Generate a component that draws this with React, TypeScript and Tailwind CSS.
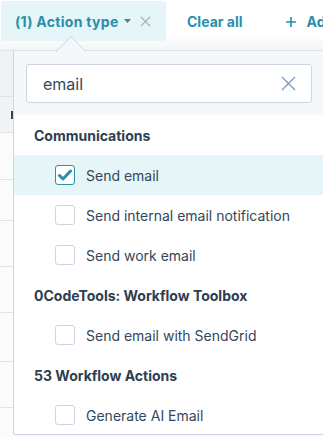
import { FC } from "react";

type Item = { label: string; checked?: boolean };
type Group = { title: string; items: Item[] };

const groups: Group[] = [
  {
    title: "Communications",
    items: [
      { label: "Send email", checked: true },
      { label: "Send internal email notification" },
      { label: "Send work email" },
    ],
  },
  {
    title: "0CodeTools: Workflow Toolbox",
    items: [{ label: "Send email with SendGrid" }],
  },
  {
    title: "53 Workflow Actions",
    items: [{ label: "Generate AI Email" }],
  },
];

const tableRows = [46, 36, 47, 41, 46, 46, 49, 46, 40];

const Checkbox: FC<{ checked?: boolean }> = ({ checked }) => (
  <span
    className={`flex h-5 w-5 shrink-0 items-center justify-center rounded-[3px] border bg-white ${
      checked ? "border-[#2a8fab]" : "border-[#cbd6e2]"
    }`}
  >
    {checked && (
      <svg width="14" height="12" viewBox="0 0 14 12">
        <path
          d="M1.5 6.5 L5 10 L12.5 2"
          fill="none"
          stroke="#2a8fab"
          strokeWidth="3"
          strokeLinecap="round"
          strokeLinejoin="round"
        />
      </svg>
    )}
  </span>
);

const App: FC = () => {
  return (
    <div className="relative h-[437px] w-[323px] overflow-hidden bg-white font-['Inter',sans-serif] text-[#33475b]">
      {/* filter bar */}
      <div className="flex h-[51px] items-start whitespace-nowrap border-b border-[#dfe3eb] bg-gradient-to-b from-white from-70% to-[#f2f4f7]">
        <div className="ml-px mt-px flex h-10 w-[165px] shrink-0 items-center rounded-[3px] bg-[#e5f5f8] pl-[14px] text-[14px] font-bold text-[#2a8fab]">
          <span className="tracking-[0.3px]">(1) Action type</span>
          <svg className="ml-[5px] shrink-0" width="7" height="4" viewBox="0 0 7 4">
            <path d="M0 0 L7 0 L3.5 4 Z" fill="#2a8fab" />
          </svg>
          <svg className="ml-[9px] shrink-0" width="11" height="11" viewBox="0 0 12 12">
            <path d="M1 1 L11 11 M11 1 L1 11" stroke="#99afc4" strokeWidth="1.4" />
          </svg>
        </div>
        <span className="ml-[21px] mt-[11px] shrink-0 text-[14px] font-bold text-[#2a8fab]">Clear all</span>
        <span className="ml-[43px] mt-[11px] flex shrink-0 items-center gap-[11px] text-[14px] font-bold text-[#2a8fab]">
          <svg width="10" height="10" viewBox="0 0 10 10">
            <path d="M5 0 V10 M0 5 H10" stroke="#2a8fab" strokeWidth="1.6" />
          </svg>
          Add filter
        </span>
      </div>

      {/* table behind */}
      <div className="flex flex-col">
        {tableRows.map((h, i) => (
          <div
            key={i}
            style={{ height: h }}
            className={`border-b border-[#dfe3eb] ${i < 2 ? "bg-[#f0f3f6]" : "bg-[#fbfbfc]"}`}
          />
        ))}
      </div>
      <div className="absolute left-[11px] top-[111px] h-2 w-[2px] bg-[#33475b]" />

      {/* popover */}
      <div className="absolute left-[13px] top-[51px] h-[384px] w-[322px] overflow-hidden whitespace-nowrap rounded-b-[3px] border border-t-0 border-[#cbd6e2] bg-white">
        <div className="bg-[#f5f8fa] px-3 pb-3 pt-[13px]">
          <div className="flex h-[39px] w-[286px] items-center justify-between rounded-[3px] border border-[#cbd6e2] bg-white pl-4 pr-[15px]">
            <span className="text-[16px] text-[#33475b]">email</span>
            <svg width="15" height="15" viewBox="0 0 15 15">
              <path d="M1 1 L14 14 M14 1 L1 14" stroke="#7c98b6" strokeWidth="1.3" />
            </svg>
          </div>
        </div>
        <div className="flex flex-col">
          {groups.map((g) => (
            <div key={g.title} className="flex flex-col">
              <div className="flex h-10 items-center pl-5 text-[14px] font-bold text-[#2d3e50]">{g.title}</div>
              {g.items.map((it) => (
                <div
                  key={it.label}
                  className={`flex h-10 items-center gap-[11px] pl-[41px] text-[14px] ${
                    it.checked ? "bg-[#e5f5f8]" : ""
                  }`}
                >
                  <Checkbox checked={it.checked} />
                  <span>{it.label}</span>
                </div>
              ))}
            </div>
          ))}
        </div>
      </div>

      {/* arrow */}
      <svg className="absolute left-[56px] top-[36px]" width="30" height="16" viewBox="0 0 30 16">
        <path d="M0 15.5 L15 0.7 L30 15.5" fill="#f5f8fa" stroke="#cbd6e2" strokeWidth="1" />
      </svg>
      <div className="absolute left-[57px] top-[51px] h-[2px] w-[28px] bg-[#f5f8fa]" />
    </div>
  );
};

export default App;
